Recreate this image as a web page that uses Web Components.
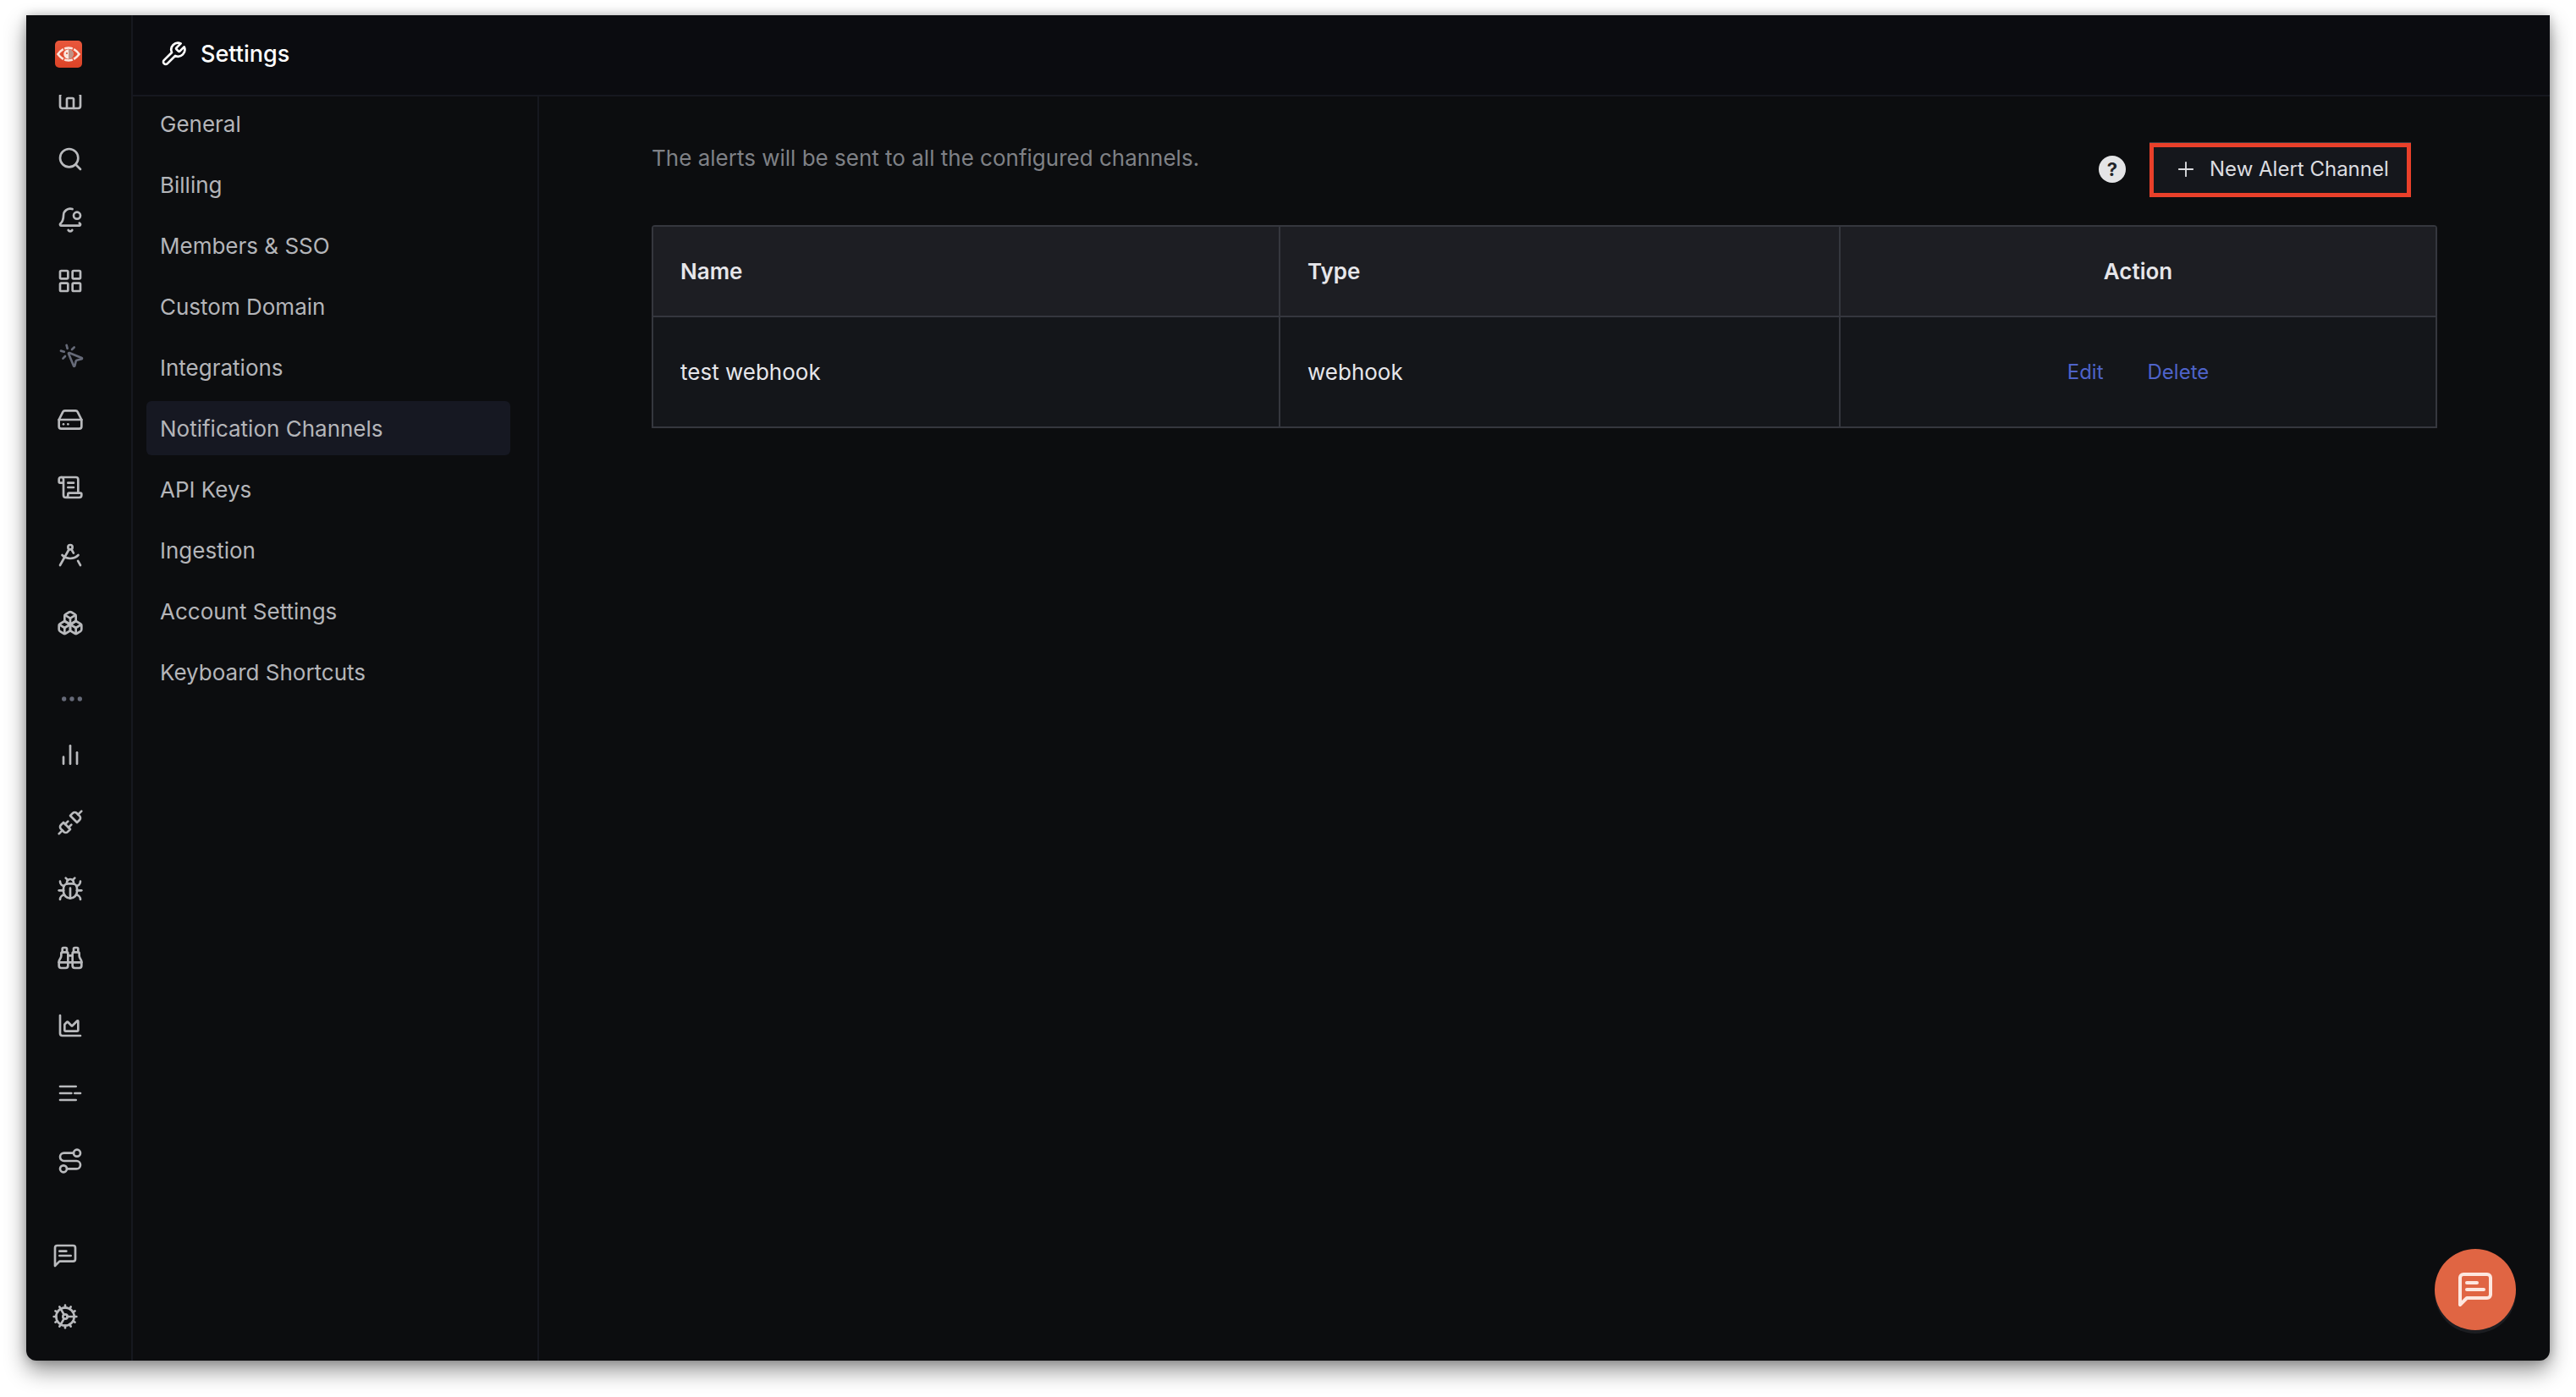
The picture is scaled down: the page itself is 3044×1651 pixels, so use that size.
<!DOCTYPE html>
<html>
<head>
<meta charset="utf-8">
<title>Settings</title>
<style>
    html, body { margin: 0; background: #fff; }
    body { font-family: Inter, "Liberation Sans", sans-serif; }
</style>
</head>
<body>
<app-window>
    <app-rail slot="rail"></app-rail>
    <page-header slot="header" title="Settings"></page-header>
    <settings-nav slot="nav">
        <nav-item>General</nav-item>
        <nav-item>Billing</nav-item>
        <nav-item>Members &amp; SSO</nav-item>
        <nav-item>Custom Domain</nav-item>
        <nav-item>Integrations</nav-item>
        <nav-item active>Notification Channels</nav-item>
        <nav-item>API Keys</nav-item>
        <nav-item>Ingestion</nav-item>
        <nav-item>Account Settings</nav-item>
        <nav-item>Keyboard Shortcuts</nav-item>
    </settings-nav>
    <channel-panel slot="main">
        <channel-table></channel-table>
    </channel-panel>
    <chat-fab slot="fab"></chat-fab>
</app-window>

<script>
const icons = {
    home: `<path d="M15 21v-8a1 1 0 0 0-1-1h-4a1 1 0 0 0-1 1v8"/><path d="M3 10a2 2 0 0 1 .709-1.528l7-5.999a2 2 0 0 1 2.582 0l7 5.999A2 2 0 0 1 21 10v9a2 2 0 0 1-2 2H5a2 2 0 0 1-2-2z"/>`,
    search: `<circle cx="11" cy="11" r="8"/><path d="m21 21-4.3-4.3"/>`,
    bell: `<path d="M10.268 21a2 2 0 0 0 3.464 0"/><path d="M13.916 2.314A6 6 0 0 0 6 8c0 4.499-1.411 5.956-2.74 7.327A1 1 0 0 0 4 17h16a1 1 0 0 0 .74-1.673 9 9 0 0 1-.585-.665"/><circle cx="18" cy="8" r="3"/>`,
    grid: `<rect x="3" y="3" width="7" height="7" rx="1"/><rect x="14" y="3" width="7" height="7" rx="1"/><rect x="14" y="14" width="7" height="7" rx="1"/><rect x="3" y="14" width="7" height="7" rx="1"/>`,
    pointer: `<path d="M14 4.1 12 6"/><path d="m5.1 8-2.9-.8"/><path d="m6 12-1.9 2"/><path d="M7.2 2.2 8 5.1"/><path d="M9.037 9.69a.498.498 0 0 1 .653-.653l11 4.5a.5.5 0 0 1-.074.949l-4.349 1.041a1 1 0 0 0-.74.739l-1.04 4.35a.5.5 0 0 1-.95.074z"/>`,
    drive: `<path d="M22 12H2"/><path d="M5.45 5.11 2 12v6a2 2 0 0 0 2 2h16a2 2 0 0 0 2-2v-6l-3.45-6.89A2 2 0 0 0 16.76 4H7.24a2 2 0 0 0-1.79 1.11z"/><path d="M6 16h.01"/><path d="M10 16h.01"/>`,
    scroll: `<path d="M15 12h-5"/><path d="M15 8h-5"/><path d="M19 17V5a2 2 0 0 0-2-2H4"/><path d="M8 21h12a2 2 0 0 0 2-2v-1a1 1 0 0 0-1-1H11a1 1 0 0 0-1 1v1a2 2 0 1 1-4 0V5a2 2 0 1 0-4 0v2a1 1 0 0 0 1 1h3"/>`,
    compass: `<path d="m12.99 6.74 1.93 3.44"/><path d="M19.136 12a10 10 0 0 1-14.271 0"/><path d="m21 21-2.16-3.84"/><path d="m3 21 8.02-14.26"/><circle cx="12" cy="5" r="2"/>`,
    boxes: `<path d="M2.97 12.92A2 2 0 0 0 2 14.63v3.24a2 2 0 0 0 .97 1.71l3 1.8a2 2 0 0 0 2.06 0L12 19v-5.5l-5-3-4.03 2.42Z"/><path d="m7 16.5-4.74-2.85"/><path d="m7 16.5 5-3"/><path d="M7 16.5v5.17"/><path d="M12 13.5V19l3.97 2.38a2 2 0 0 0 2.06 0l3-1.8a2 2 0 0 0 .97-1.71v-3.24a2 2 0 0 0-.97-1.71L17 10.5l-5 3Z"/><path d="m17 16.5-5-3"/><path d="m17 16.5 4.74-2.85"/><path d="M17 16.5v5.17"/><path d="M7.97 4.42A2 2 0 0 0 7 6.13v4.37l5 3 5-3V6.13a2 2 0 0 0-.97-1.71l-3-1.8a2 2 0 0 0-2.06 0l-3 1.8Z"/><path d="M12 8 7.26 5.15"/><path d="m12 8 4.74-2.85"/><path d="M12 13.5V8"/>`,
    dots: `<circle cx="5" cy="12" r="2" fill="currentColor" stroke="none"/><circle cx="12" cy="12" r="2" fill="currentColor" stroke="none"/><circle cx="19" cy="12" r="2" fill="currentColor" stroke="none"/>`,
    bars: `<path d="M18 20V10"/><path d="M12 20V4"/><path d="M6 20v-6"/>`,
    unplug: `<path d="m19 5 3-3"/><path d="m2 22 3-3"/><path d="M6.3 20.3a2.4 2.4 0 0 0 3.4 0L12 18l-6-6-2.3 2.3a2.4 2.4 0 0 0 0 3.4Z"/><path d="M7.5 13.5 10 11"/><path d="M10.5 16.5 13 14"/><path d="m12 6 6 6 2.3-2.3a2.4 2.4 0 0 0 0-3.4l-2.6-2.6a2.4 2.4 0 0 0-3.4 0Z"/>`,
    bug: `<path d="m8 2 1.88 1.88"/><path d="M14.12 3.88 16 2"/><path d="M9 7.13v-1a3.003 3.003 0 1 1 6 0v1"/><path d="M12 20c-3.3 0-6-2.7-6-6v-3a4 4 0 0 1 4-4h4a4 4 0 0 1 4 4v3c0 3.3-2.7 6-6 6"/><path d="M12 20v-9"/><path d="M6.53 9C4.6 8.8 3 7.1 3 5"/><path d="M6 13H2"/><path d="M3 21c0-2.1 1.7-3.9 3.8-4"/><path d="M20.97 5c0 2.1-1.6 3.8-3.5 4"/><path d="M22 13h-4"/><path d="M17.2 17c2.1.1 3.8 1.9 3.8 4"/>`,
    binoculars: `<path d="M10 10h4"/><path d="M19 7V4a1 1 0 0 0-1-1h-2a1 1 0 0 0-1 1v3"/><path d="M20 21a2 2 0 0 0 2-2v-3.851c0-1.39-2-2.962-2-4.829V8a1 1 0 0 0-1-1h-4a1 1 0 0 0-1 1v11a2 2 0 0 0 2 2z"/><path d="M22 16H2"/><path d="M4 21a2 2 0 0 1-2-2v-3.851c0-1.39 2-2.962 2-4.829V8a1 1 0 0 1 1-1h4a1 1 0 0 1 1 1v11a2 2 0 0 1-2 2z"/><path d="M9 7V4a1 1 0 0 0-1-1H6a1 1 0 0 0-1 1v3"/>`,
    area: `<path d="M3 3v16a2 2 0 0 0 2 2h16"/><path d="M7 11.207a.5.5 0 0 1 .146-.353l2-2a.5.5 0 0 1 .708 0l3.292 3.292a.5.5 0 0 0 .708 0l4.292-4.292a.5.5 0 0 1 .854.353V16a1 1 0 0 1-1 1H8a1 1 0 0 1-1-1z"/>`,
    logs: `<path d="M3 6h14"/><path d="M3 12h10"/><path d="M16 12h5"/><path d="M3 18h14"/>`,
    route: `<circle cx="6" cy="19" r="3"/><path d="M9 19h8.5a3.5 3.5 0 0 0 0-7h-11a3.5 3.5 0 0 1 0-7H15"/><circle cx="18" cy="5" r="3"/>`,
    message: `<path d="M21 15a2 2 0 0 1-2 2H7l-4 4V5a2 2 0 0 1 2-2h14a2 2 0 0 1 2 2z"/><path d="M13 8H7"/><path d="M17 12H7"/>`,
    cog: `<path d="M12 20a8 8 0 1 0 0-16 8 8 0 0 0 0 16Z"/><path d="M12 14a2 2 0 1 0 0-4 2 2 0 0 0 0 4Z"/><path d="M12 2v2"/><path d="M12 22v-2"/><path d="m17 20.66-1-1.73"/><path d="M11 10.27 7 3.34"/><path d="m20.66 17-1.73-1"/><path d="m3.34 7 1.73 1"/><path d="M14 12h8"/><path d="M2 12h2"/><path d="m20.66 7-1.73 1"/><path d="m3.34 17 1.73-1"/><path d="m17 3.34-1 1.73"/><path d="m11 13.73-4 6.93"/>`,
    wrench: `<path d="M14.7 6.3a1 1 0 0 0 0 1.4l1.6 1.6a1 1 0 0 0 1.4 0l3.77-3.77a6 6 0 0 1-7.94 7.94l-6.91 6.91a2.12 2.12 0 0 1-3-3l6.91-6.91a6 6 0 0 1 7.94-7.94l-3.76 3.76z"/>`,
    plus: `<path d="M5 12h14"/><path d="M12 5v14"/>`
};

function svgIcon(name, size, width) {
    return `<svg xmlns="http://www.w3.org/2000/svg" width="${size}" height="${size}" viewBox="0 0 24 24" fill="none" stroke="currentColor" stroke-width="${width || 2}" stroke-linecap="round" stroke-linejoin="round" style="display:block">${icons[name]}</svg>`;
}

class AppWindow extends HTMLElement {
    connectedCallback() {
        const shadow = this.attachShadow({ mode: "open" });
        shadow.innerHTML = `
        <style>
            :host { display: block; padding: 18px 31px 43px 31px; height: 1651px; box-sizing: border-box; }
            .frame {
                position: relative;
                display: grid;
                grid-template-columns: 126px 1fr;
                height: 100%;
                background: #0c0d0f;
                border-radius: 0 0 12px 12px;
                box-shadow: 0 12px 26px rgba(0,0,0,.42), 0 0 12px rgba(0,0,0,.22);
                overflow: hidden;
            }
            .side { display: grid; grid-template-rows: 96px 1fr; min-width: 0; min-height: 0; }
            .body { display: grid; grid-template-columns: 480px 1fr; min-height: 0; }
            .fab { position: absolute; right: 40px; bottom: 36px; }
        </style>
        <div class="frame">
            <slot name="rail"></slot>
            <div class="side">
                <slot name="header"></slot>
                <div class="body">
                    <slot name="nav"></slot>
                    <slot name="main"></slot>
                </div>
            </div>
            <div class="fab"><slot name="fab"></slot></div>
        </div>`;
    }
}

class RailIcon extends HTMLElement {
    connectedCallback() {
        const shadow = this.attachShadow({ mode: "open" });
        shadow.innerHTML = `
        <style>
            :host { display: block; width: 32px; height: 32px; color: #b9babd; }
            :host([dim]) { color: #666a78; }
        </style>
        ${svgIcon(this.getAttribute("name"), 32)}`;
    }
}

class AppRail extends HTMLElement {
    connectedCallback() {
        const shadow = this.attachShadow({ mode: "open" });
        const item = (name, gap, extra) => `<rail-icon name="${name}" style="margin-top:${gap}px;${extra && extra.style || ""}" ${extra && extra.dim ? "dim" : ""}></rail-icon>`;
        shadow.innerHTML = `
        <style>
            :host { display: flex; flex-direction: column; height: 100%; min-height: 0; box-sizing: border-box; border-right: 2px solid #16181f; padding: 30px 0 36px 0; }
            .logo { margin-left: 34px; width: 32px; height: 32px; flex: none; border-radius: 5px; background: linear-gradient(180deg, #e8573c, #dc4327); }
            .clip { margin-top: 32px; overflow: hidden; padding-left: 36px; flex: none; height: 1292px; }
            .bottom { margin-top: auto; padding-left: 30px; }
        </style>
        <div class="logo">
            <svg width="32" height="32" viewBox="0 0 32 32" fill="none" style="display:block">
                <path d="M3.500 16C7.500 10.500 12 8.500 16 8.500S24.500 10.500 28.500 16C24.500 21.500 20 23.500 16 23.500S7.500 21.500 3.500 16Z" stroke="#fbe6de" stroke-width="2.600"/>
                <path d="M9.500 7.500l1.500 3.500M22.500 7.500l-1.500 3.500M9.500 24.500l1.500-3.500M22.500 24.500l-1.500-3.500" stroke="#e34e32" stroke-width="1.600"/>
                <circle cx="16" cy="16" r="5.800" fill="#fbe6de"/>
                <path d="M16 10.200a5.800 5.800 0 0 1 0 11.600z" fill="#8a4a3c" opacity=".55"/>
                <circle cx="14" cy="15" r="1" fill="#d9482a"/>
            </svg>
        </div>
        <div class="clip">
            ${item("home", -12)}
            ${item("search", 40)}
            ${item("bell", 40)}
            ${item("grid", 40)}
            ${item("pointer", 57, { dim: true, style: "transform:translateX(2px);" })}
            ${item("drive", 43)}
            ${item("scroll", 48)}
            ${item("compass", 48)}
            ${item("boxes", 48)}
            ${item("dots", 58, { dim: true, style: "transform:translateX(2px);" })}
            ${item("bars", 34)}
            ${item("unplug", 48)}
            ${item("bug", 47)}
            ${item("binoculars", 49)}
            ${item("area", 48)}
            ${item("logs", 48)}
            ${item("route", 48)}
        </div>
        <div class="bottom">
            ${item("message", 0)}
            ${item("cog", 40)}
        </div>`;
    }
}

class PageHeader extends HTMLElement {
    connectedCallback() {
        const shadow = this.attachShadow({ mode: "open" });
        shadow.innerHTML = `
        <style>
            :host { display: flex; align-items: center; gap: 16px; box-sizing: border-box; height: 96px; padding: 0 0 3px 32px; border-bottom: 2px solid #16181f; background: #0b0c10; color: #fff; font-size: 27px; font-weight: 500; }
        </style>
        ${svgIcon("wrench", 32)}
        <span>${this.getAttribute("title")}</span>`;
    }
}

class SettingsNav extends HTMLElement {
    connectedCallback() {
        const shadow = this.attachShadow({ mode: "open" });
        shadow.innerHTML = `
        <style>
            :host { display: flex; flex-direction: column; gap: 8px; box-sizing: border-box; padding: 0 32px 0 16px; border-right: 2px solid #16181f; }
        </style>
        <slot></slot>`;
    }
}

class NavItem extends HTMLElement {
    connectedCallback() {
        const shadow = this.attachShadow({ mode: "open" });
        shadow.innerHTML = `
        <style>
            :host { display: flex; align-items: center; height: 64px; padding: 0 16px; border-radius: 6px; color: #b4b5b9; font-size: 26px; }
            :host([active]) { background: #161822; }
        </style>
        <slot></slot>`;
    }
}

class ChannelPanel extends HTMLElement {
    connectedCallback() {
        const shadow = this.attachShadow({ mode: "open" });
        shadow.innerHTML = `
        <style>
            :host { display: block; padding: 55px 133px 0 133px; }
            .top { display: flex; align-items: flex-start; justify-content: space-between; height: 97px; padding-right: 31px; }
            p { margin: 0; padding-top: 1px; line-height: 34px; font-size: 26px; color: #7f8186; }
            .actions { display: flex; align-items: center; gap: 28px; }
            help-dot { margin-bottom: 2px; }
        </style>
        <div class="top">
            <p>The alerts will be sent to all the configured channels.</p>
            <div class="actions">
                <help-dot></help-dot>
                <new-button>New Alert Channel</new-button>
            </div>
        </div>
        <slot></slot>`;
    }
}

class HelpDot extends HTMLElement {
    connectedCallback() {
        const shadow = this.attachShadow({ mode: "open" });
        shadow.innerHTML = `
        <style>
            :host { display: flex; align-items: center; justify-content: center; width: 32px; height: 32px; border-radius: 50%; background: #e4e4e6; color: #232428; font-size: 22px; font-weight: 700; }
        </style>
        ?`;
    }
}

class NewButton extends HTMLElement {
    connectedCallback() {
        const shadow = this.attachShadow({ mode: "open" });
        shadow.innerHTML = `
        <style>
            :host { display: flex; align-items: center; gap: 14px; box-sizing: border-box; height: 64px; width: 309px; padding: 0 0 3px 24px; border: 5px solid #e9402a; background: #15171c; color: #dcdde0; font-size: 24px; box-shadow: 0 -1px 0 #3a3c42; }
        </style>
        ${svgIcon("plus", 28, 1.6)}
        <slot></slot>`;
    }
}

class ChannelTable extends HTMLElement {
    connectedCallback() {
        const shadow = this.attachShadow({ mode: "open" });
        shadow.innerHTML = `
        <style>
            :host { display: block; }
            .table { display: grid; grid-template-columns: 739px 662px 1fr; grid-template-rows: 107px 129px; border: 2px solid #35373e; border-radius: 4px 4px 0 0; font-size: 26px; color: #e6e6ea; }
            .cell { display: flex; align-items: center; padding: 0 32px; border-left: 2px solid #35373e; }
            .cell:nth-child(3n+1) { border-left: 0; }
            .head { background: #1d1e23; font-weight: 600; border-bottom: 2px solid #35373e; }
            .row { background: #14161a; }
            .center { justify-content: center; }
            .links { gap: 52px; color: #4e63c9; font-size: 24px; }
        </style>
        <div class="table">
            <div class="cell head">Name</div>
            <div class="cell head">Type</div>
            <div class="cell head center">Action</div>
            <div class="cell row">test webhook</div>
            <div class="cell row">webhook</div>
            <div class="cell row center links"><span>Edit</span><span>Delete</span></div>
        </div>`;
    }
}

class ChatFab extends HTMLElement {
    connectedCallback() {
        const shadow = this.attachShadow({ mode: "open" });
        shadow.innerHTML = `
        <style>
            :host { display: flex; align-items: center; justify-content: center; width: 96px; height: 96px; border-radius: 50%; background: #e06543; color: #fde7df; box-shadow: 0 4px 0 #1c1d21; }
        </style>
        ${svgIcon("message", 48, 2)}`;
    }
}

customElements.define("rail-icon", RailIcon);
customElements.define("app-rail", AppRail);
customElements.define("page-header", PageHeader);
customElements.define("settings-nav", SettingsNav);
customElements.define("nav-item", NavItem);
customElements.define("help-dot", HelpDot);
customElements.define("new-button", NewButton);
customElements.define("channel-table", ChannelTable);
customElements.define("channel-panel", ChannelPanel);
customElements.define("chat-fab", ChatFab);
customElements.define("app-window", AppWindow);
</script>
</body>
</html>
